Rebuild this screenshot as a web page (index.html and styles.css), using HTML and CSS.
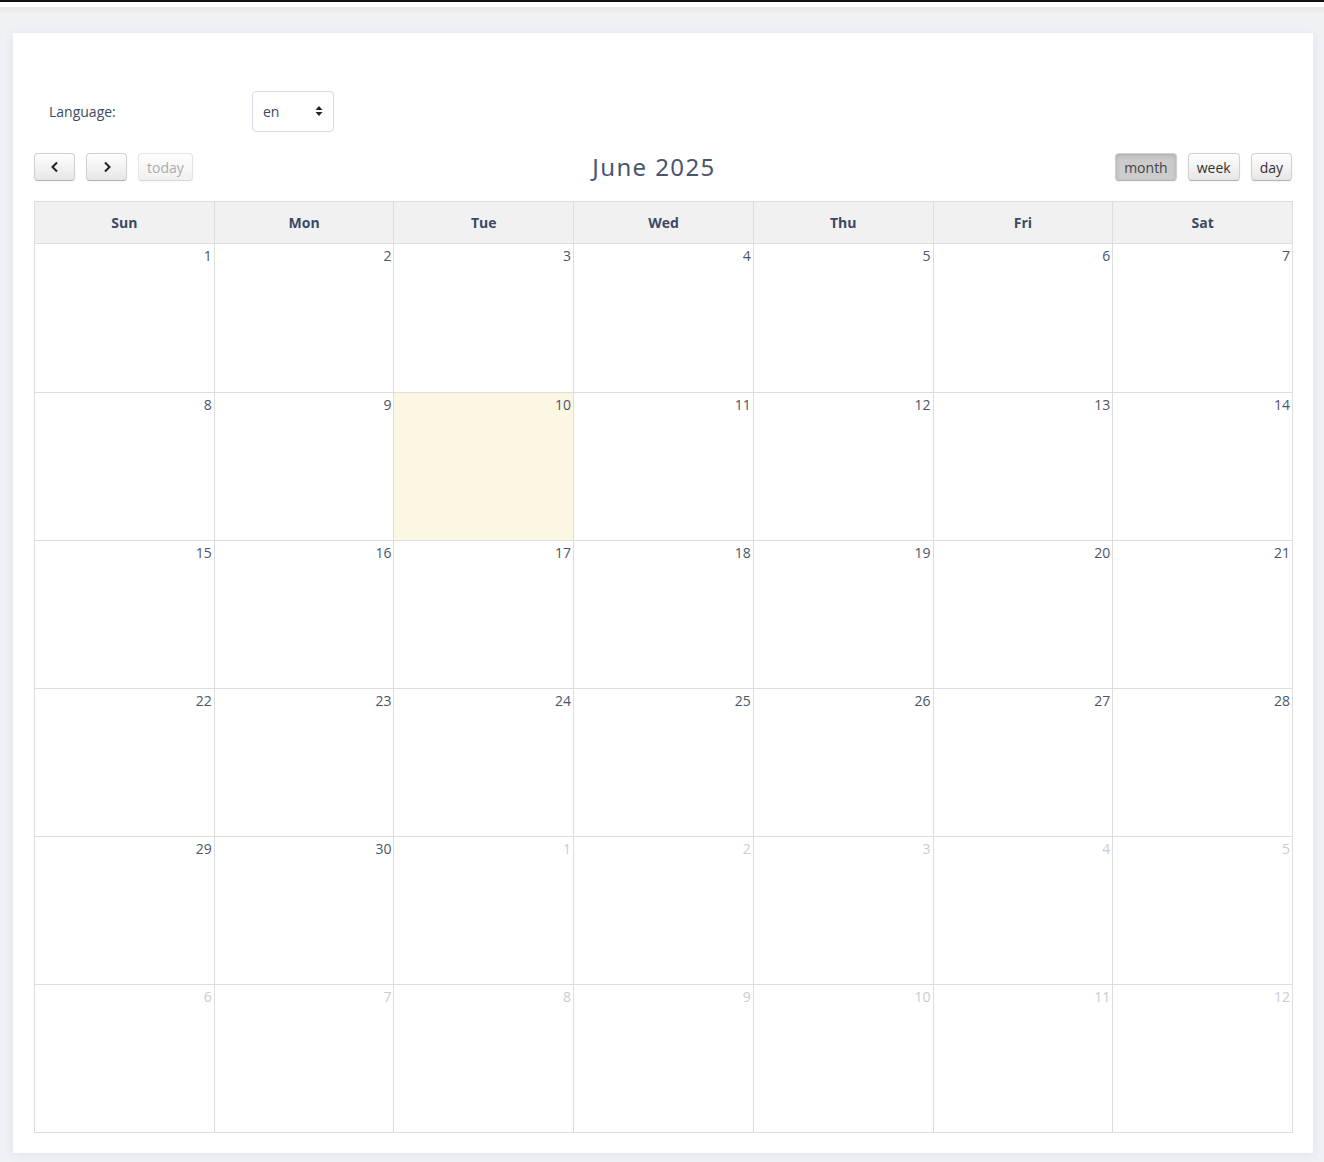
FILE: index.html
```html
<!DOCTYPE html>
<html lang="en">
<head>
    <meta charset="UTF-8">
    <title>Calendar</title>
    <link rel="stylesheet" href="styles.css">
</head>
<body>
    <div class="topline"></div>
    <div class="page">
        <div class="card">
            <div class="lang-row">
                <label class="lang-label" for="lang">Language:</label>
                <div class="select-wrap">
                    <select id="lang" class="lang-select">
                        <option>en</option>
                    </select>
                    <svg class="select-caret" width="8" height="12" viewBox="0 0 8 12"><path d="M4 1 L7.5 5 H0.5 Z M4 11 L7.5 7 H0.5 Z" fill="#222"/></svg>
                </div>
            </div>

            <div class="toolbar">
                <div class="tb-left">
                    <button class="fc-btn icon-btn"><svg width="10" height="12" viewBox="0 0 10 12"><path d="M7 1.5 L2.5 6 L7 10.5" fill="none" stroke="#222" stroke-width="2"/></svg></button>
                    <button class="fc-btn icon-btn"><svg width="10" height="12" viewBox="0 0 10 12"><path d="M3 1.5 L7.5 6 L3 10.5" fill="none" stroke="#222" stroke-width="2"/></svg></button>
                    <button class="fc-btn disabled">today</button>
                </div>
                <h2 class="title">June 2025</h2>
                <div class="tb-right">
                    <button class="fc-btn active">month</button>
                    <button class="fc-btn">week</button>
                    <button class="fc-btn">day</button>
                </div>
            </div>

            <table class="cal">
                <thead>
                    <tr><th>Sun</th><th>Mon</th><th>Tue</th><th>Wed</th><th>Thu</th><th>Fri</th><th>Sat</th></tr>
                </thead>
                <tbody>
                    <tr><td>1</td><td>2</td><td>3</td><td>4</td><td>5</td><td>6</td><td>7</td></tr>
                    <tr><td>8</td><td>9</td><td class="today">10</td><td>11</td><td>12</td><td>13</td><td>14</td></tr>
                    <tr><td>15</td><td>16</td><td>17</td><td>18</td><td>19</td><td>20</td><td>21</td></tr>
                    <tr><td>22</td><td>23</td><td>24</td><td>25</td><td>26</td><td>27</td><td>28</td></tr>
                    <tr><td>29</td><td>30</td><td class="other">1</td><td class="other">2</td><td class="other">3</td><td class="other">4</td><td class="other">5</td></tr>
                    <tr><td class="other">6</td><td class="other">7</td><td class="other">8</td><td class="other">9</td><td class="other">10</td><td class="other">11</td><td class="other">12</td></tr>
                </tbody>
            </table>
        </div>
    </div>
</body>
</html>
```

FILE: styles.css
```css
html, body {
    margin: 0;
    padding: 0;
}
body {
    font-family: "Open Sans", "Noto Sans", sans-serif;
    font-size: 14px;
    color: #3b4a63;
    background: #f0f1f5;
    height: 1162px;
    overflow: hidden;
}
.topline {
    height: 2px;
    background: #111;
    border-bottom: 5px solid #fff;
}
.page {
    padding: 26px 11px 0 13px;
    box-shadow: inset 0 6px 8px -6px rgba(0,0,0,0.08);
}
.card {
    width: 1258px;
    height: 1078px;
    background: #fff;
    padding: 21px;
    box-shadow: 0 2px 10px rgba(60,70,110,0.08);
}
.lang-row {
    display: flex;
    align-items: center;
    margin-top: 37px;
    height: 40px;
}
.lang-label {
    width: 203px;
    padding-left: 15px;
    color: #3b4a63;
}
.select-wrap {
    position: relative;
    width: 82px;
    height: 41px;
}
.lang-select {
    appearance: none;
    -webkit-appearance: none;
    width: 82px;
    height: 41px;
    border: 1px solid #d5dae3;
    border-radius: 4px;
    background: #fff;
    padding: 0 10px;
    font-family: inherit;
    font-size: 14px;
    color: #3b4a63;
}
.select-caret {
    position: absolute;
    right: 11px;
    top: 14px;
}
.toolbar {
    display: flex;
    align-items: center;
    margin-top: 21px;
    height: 30px;
}
.tb-left, .tb-right {
    display: flex;
    gap: 11px;
}
.title {
    flex: 1;
    margin: -2px 0 0;
    text-align: center;
    font-family: "Noto Sans", "Open Sans", sans-serif;
    font-weight: 400;
    font-size: 24px;
    letter-spacing: 1.4px;
    color: #4a556f;
}
.fc-btn {
    height: 28px;
    padding: 0 8px;
    font-family: inherit;
    font-size: 14px;
    color: #333;
    background: linear-gradient(#fff, #e6e6e6);
    border: 1px solid #d0d0d0;
    border-bottom-color: #b3b3b3;
    border-radius: 4px;
    box-shadow: inset 0 1px 0 rgba(255,255,255,.2), 0 1px 2px rgba(0,0,0,.05);
    cursor: pointer;
}
.icon-btn {
    width: 41px;
    display: flex;
    align-items: center;
    justify-content: center;
}
.fc-btn.disabled {
    opacity: .55;
    color: #666;
}
.fc-btn.active {
    background: #cccccc;
    color: #444;
    box-shadow: inset 0 2px 4px rgba(0,0,0,.15), 0 1px 2px rgba(0,0,0,.05);
}
.cal {
    width: 1259px;
    margin-top: 19px;
    border-collapse: collapse;
    table-layout: fixed;
}
.cal th, .cal td {
    border: 1px solid #dddddd;
}
.cal th {
    height: 39px;
    background: #f1f1f1;
    font-weight: 700;
    color: #3b4a63;
}
.cal td {
    height: 145px;
    vertical-align: top;
    text-align: right;
    padding: 2px 2px 0 0;
    color: #4a5568;
    line-height: 20px;
}
.cal tbody tr:first-child td {
    height: 146px;
}
.cal td.today {
    background: #fcf7e3;
}
.cal td.other {
    color: #c8ccd2;
}
```
